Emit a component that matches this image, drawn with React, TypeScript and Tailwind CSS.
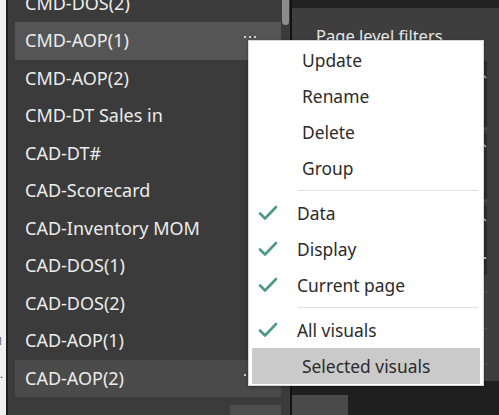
import { Fragment } from "react";

const pages = [
  "CMD-DOS(2)",
  "CMD-AOP(1)",
  "CMD-AOP(2)",
  "CMD-DT Sales in",
  "CAD-DT#",
  "CAD-Scorecard",
  "CAD-Inventory MOM",
  "CAD-DOS(1)",
  "CAD-DOS(2)",
  "CAD-AOP(1)",
  "CAD-AOP(2)",
];

type MenuItem = { label: string; checked?: boolean; check?: boolean; sepBefore?: boolean; active?: boolean };

const menu: MenuItem[] = [
  { label: "Update" },
  { label: "Rename" },
  { label: "Delete" },
  { label: "Group" },
  { label: "Data", check: true, checked: true, sepBefore: true },
  { label: "Display", check: true, checked: true },
  { label: "Current page", check: true, checked: true },
  { label: "All visuals", check: true, checked: true, sepBefore: true },
  { label: "Selected visuals", active: true },
];

function Check() {
  return (
    <svg width="20" height="18" viewBox="0 0 20 18" className="shrink-0">
      <path d="M2 9.5 L7 14.5 L18 3" fill="none" stroke="#4f9a86" strokeWidth="2.6" strokeLinecap="round" strokeLinejoin="round" />
    </svg>
  );
}

function Chevron() {
  return (
    <svg width="10" height="10" viewBox="0 0 10 10" className="shrink-0">
      <path d="M1 1 L9 9" stroke="#bdbdbd" strokeWidth="1.5" />
    </svg>
  );
}

export default function App() {
  return (
    <div className="relative flex h-[415px] w-[499px] overflow-hidden bg-[#3b3b3b] font-['Noto_Sans',sans-serif]">
      {/* sliver of the canvas on the left */}
      <div className="relative w-[6px] shrink-0 bg-[#efefef]">
        <span className="absolute left-[-3px] top-[333px] text-[11px] text-[#666]">1</span>
        <span className="absolute left-0 top-[366px] text-[11px] text-[#333]">.</span>
      </div>
      <div className="w-[2px] shrink-0 bg-[#1e1e1e]" />

      {/* page list */}
      <div className="w-[273px] shrink-0 overflow-hidden bg-[#3b3b3b] pl-[7px]">
        <div className="-mt-[15.5px]">
          {pages.map((p, i) => (
            <div
              key={p}
              className={
                "relative flex h-[37.5px] items-center pl-[10px] text-[18px] text-[#ececec] " +
                (i === 1 ? "bg-[#555555]" : i === 10 ? "bg-[#4a4a4a]" : "")
              }
            >
              {p}
              {(i === 1 || i === 10) && (
                <span className="absolute left-[229px] top-[14px] flex gap-[3px]">
                  <span className="h-[2px] w-[2px] bg-[#cfcfcf]" />
                  <span className="h-[2px] w-[2px] bg-[#cfcfcf]" />
                  <span className="h-[2px] w-[2px] bg-[#cfcfcf]" />
                </span>
              )}
            </div>
          ))}
        </div>
        <div className="mt-[8px] ml-[215px] h-[20px] w-[60px] bg-[#4d4d4d]" />
      </div>

      {/* scrollbar */}
      <div className="w-[9px] shrink-0 bg-[#3b3b3b]">
        <div className="ml-[1px] h-[25px] w-[7px] rounded-b-full bg-[#8c8c8c]" />
      </div>
      <div className="w-[2px] shrink-0 bg-[#111111]" />

      {/* filters pane */}
      <div className="flex min-w-0 flex-1 flex-col bg-[#3e3e3e]">
        <div className="h-[8px] bg-[#222222]" />
        <div className="flex h-[54px] items-center pl-[24px] pt-[4px] text-[16.5px] text-[#e6e6e6]">Page level filters</div>
        <div className="mx-[12px] flex h-[70px] items-start justify-end border-b-[3px] border-[#474747] bg-[#2c2c2c] pt-[8px]">
          <Chevron />
        </div>
        <div className="mx-[12px] mt-[4px] flex h-[70px] items-start justify-end border-b-[3px] border-[#474747] bg-[#2c2c2c] pt-[4px]">
          <Chevron />
        </div>
        <div className="mx-[12px] mt-[4px] flex h-[70px] flex-col items-end bg-[#2c2c2c] pt-[6px]">
          <Chevron />
          <span className="mt-[20px] text-[15px] text-[#e6e6e6]">a...</span>
        </div>
        <div className="mx-[12px] flex h-[108px] flex-col justify-around bg-[#404040]">
          <div className="border-t border-dashed border-[#5a5a5a]" />
          <div className="border-t border-dashed border-[#5a5a5a]" />
          <div className="border-t border-dashed border-[#5a5a5a]" />
        </div>
        <div className="flex-1 bg-[#1f1f1f]">
          <div className="mt-[14px] h-[20px] w-[56px] bg-[#4a4a4a]" />
        </div>
      </div>

      {/* context menu */}
      <div className="absolute left-[248px] top-[40px] w-[236px] border border-[#d6d6d6] bg-white px-[3px] pb-[1px] pt-[1px] text-[17.4px] text-[#2b2b2b] shadow-[0_1px_3px_rgba(0,0,0,0.35)]">
        {menu.map((m) => (
          <Fragment key={m.label}>
            {m.sepBefore && <div className="my-[4px] ml-[46px] mr-[2px] h-px bg-[#e0e0e0]" />}
            <div
              className={
                "flex h-[36px] items-center " +
                (m.active ? "bg-[#cacaca] pl-[50px]" : m.check ? "pl-[5px]" : "pl-[50px]")
              }
            >
              {m.check && (
                <span className="mr-[18px] flex w-[22px] justify-center">
                  <Check />
                </span>
              )}
              {m.label}
            </div>
          </Fragment>
        ))}
      </div>
    </div>
  );
}
